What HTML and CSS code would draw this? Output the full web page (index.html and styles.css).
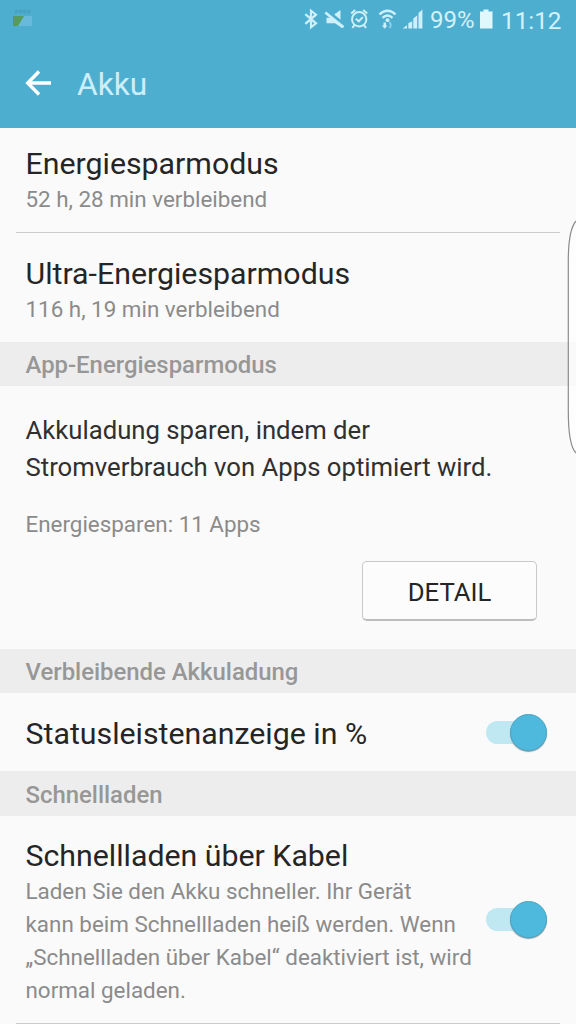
FILE: index.html
```html
<!DOCTYPE html>
<html lang="de">
<head>
<meta charset="utf-8">
<title>Akku</title>
<link rel="stylesheet" href="styles.css">
</head>
<body>
<div class="screen">
  <header class="header">
    <div class="status">
      <svg class="notification" width="20" height="20" viewBox="0 0 20 20"><path d="M2 3.500h16" stroke="#3e8aa5" stroke-width="3.500" stroke-dasharray="3.200 .9" opacity=".35"/><path d="M0 8h19v10H0z" fill="#68b9dc"/><path d="M0 8h11L5 18H0z" fill="#559b5c"/></svg>
      <div class="status-icons">
        <svg width="130" height="24" viewBox="300 8 130 24" fill="none" stroke="#cdf0fa">
          <path d="M305.300 14.200L316 23.300l-5 4V10.700l5 4-10.700 9.100" stroke-width="2.200"/>
          <path d="M340.500 10v9.800l-6.300-5.300zM326.500 17.800h5L343.500 25.800v2h-2l-6.500-4.600h-8.500z" fill="#cdf0fa" stroke="none"/>
          <path d="M325.300 12.500L343.300 27" stroke-width="2.600"/>
          <g stroke-width="2"><circle cx="359.200" cy="19.300" r="7.200"/><path d="M355.800 18.800l3 2.500 4-4.200M351.200 13.500l4-3.500M367.200 13.500l-4-3.500M354.500 25.200l-2.200 2.600M363.900 25.200l2.200 2.600"/></g>
          <g stroke-width="2.400"><path d="M379.500 14.300q8-7.300 16 0M382.500 17.800q5-4.400 10 0"/></g>
          <circle cx="387.500" cy="20.200" r="1.900" fill="#cdf0fa" stroke="none"/>
          <path d="M383.500 22.500h2.500v3h1.500l-2.800 3.200-2.800-3.200h1.600z" fill="#cdf0fa" stroke="none"/>
          <path d="M389.500 22q2.500 3 0 6" stroke="#8fd2e7" stroke-width="1.800"/>
          <path d="M402.500 28.500l4.500-3.200v3.200zM408.300 23.300l3.900-2v7.200h-3.900zM413.300 18.500l3.900-3v13h-3.900zM418.500 13l3.900-3.500v19h-3.900z" fill="#cdf0fa" stroke="none"/>
        </svg>
        <span class="percent">99%</span>
        <svg class="battery" width="14" height="20" viewBox="0 0 14 20"><path d="M4.500 .5h5v2h4V19.500H1V2.500h3.500z" fill="#e0f7fc"/></svg>
        <span class="clock">11:12</span>
      </div>
    </div>
    <div class="appbar">
      <svg class="back" width="26" height="26" viewBox="0 0 26 26" fill="none" stroke="#fff" stroke-width="3.400"><path d="M26 13H3M14 1.500L2.700 13l11.300 11.500"/></svg>
      <h1 class="heading">Akku</h1>
    </div>
  </header>
  <main>
    <section class="row row-first">
      <h2 class="title">Energiesparmodus</h2>
      <p class="sub">52 h, 28 min verbleibend</p>
    </section>
    <hr class="divider">
    <section class="row row-second">
      <h2 class="title">Ultra-Energiesparmodus</h2>
      <p class="sub">116 h, 19 min verbleibend</p>
    </section>
    <h3 class="section">App-Energiesparmodus</h3>
    <section class="row row-apps">
      <p class="body">Akkuladung sparen, indem der<br>Stromverbrauch von Apps optimiert wird.</p>
      <p class="sub apps">Energiesparen: 11 Apps</p>
      <button class="detail">DETAIL</button>
    </section>
    <h3 class="section">Verbleibende Akkuladung</h3>
    <section class="row row-status">
      <h2 class="title">Statusleistenanzeige in %</h2>
      <span class="switch"><span class="knob"></span></span>
    </section>
    <h3 class="section section-last">Schnellladen</h3>
    <section class="row row-cable">
      <div class="cable-text">
        <h2 class="title">Schnellladen über Kabel</h2>
        <p class="sub">Laden Sie den Akku schneller. Ihr Gerät<br>kann beim Schnellladen heiß werden. Wenn<br>„Schnellladen über Kabel“ deaktiviert ist, wird<br>normal geladen.</p>
      </div>
      <span class="switch"><span class="knob"></span></span>
    </section>
    <hr class="divider">
  </main>
  <svg class="edge-panel" width="9" height="236" viewBox="0 0 9 236"><path d="M9 2C3 9 1.300 22 1.300 42v150c0 22 1.700 36 7.700 42z" fill="#fff" fill-opacity=".65"/><path d="M9 2C3 9 1.300 22 1.300 42v150c0 22 1.700 36 7.700 42" fill="none" stroke="#8b8b8b" stroke-width="1.200"/></svg>
</div>
</body>
</html>
```
FILE: styles.css
```css
* { box-sizing: border-box; }
body { margin: 0; font-family: Roboto, "Liberation Sans", sans-serif; background: #fafafa; color: #252525; }
h1, h2, h3, p { margin: 0; font-weight: 400; white-space: nowrap; }
.screen { position: relative; width: 576px; height: 1024px; overflow: hidden; }
.header { height: 128px; background: #4eaed0; }
.status { height: 40px; display: flex; justify-content: space-between; padding: 0 15px 0 13px; }
.notification { margin-top: 8px; }
.status-icons { display: flex; align-items: center; color: #d3f2fa; font-size: 24px; }
.percent { width: 49px; white-space: nowrap; }
.battery { margin: 0 8px 2px 0; }
.clock { width: 60px; font-size: 24.3px; white-space: nowrap; }
.appbar { height: 88px; display: flex; align-items: center; padding-left: 25px; }
.back { margin-top: -2px; }
.heading { margin-left: 26px; padding-top: 1px; font-size: 31.7px; line-height: 36px; color: #cceefa; }
.row { padding: 0 25.5px; }
.row-first { height: 104px; padding-top: 18px; }
.row-second { height: 109px; padding-top: 23px; }
.title { font-size: 30.3px; line-height: 36px; }
.sub { font-size: 22.4px; line-height: 33px; color: #8b8b8b; }
.title + .sub { padding-top: 1px; }
.divider { height: 1px; margin: 0 16px; border: 0; background: #cbcbcb; }
.section { height: 44px; padding-left: 25.5px; background: #ededed; color: #979797; font-size: 23.9px; line-height: 46px; font-weight: 500; }
.section-last { height: 45px; line-height: 48px; }
.row-apps { height: 263px; padding-top: 26px; padding-right: 39px; display: flex; flex-direction: column; }
.body { font-size: 25.7px; line-height: 37px; color: #303030; }
.apps { margin-top: 22px; }
.detail { align-self: flex-end; width: 175px; height: 60px; margin-top: 20px; padding: 2px 0 0; border: 1px solid #c9c9c9; border-bottom: 2px solid #bdbdbd; border-radius: 5px; background: #fcfcfc; color: #252525; font: 25.7px Roboto, "Liberation Sans", sans-serif; }
.row-status, .row-cable { display: flex; align-items: center; justify-content: space-between; padding-right: 29px; }
.row-status { height: 78px; }
.row-status .title { padding-top: 3px; }
.row-cable { height: 207px; }
.cable-text { padding-top: 5px; }
.switch { flex: none; position: relative; width: 61px; height: 37px; margin-left: -20px; display: flex; justify-content: flex-end; }
.switch::before { content: ""; position: absolute; left: 0; top: 7px; width: 50px; height: 23px; border-radius: 12px; background: #bfe8f3; }
.knob { position: relative; width: 37px; height: 37px; border-radius: 50%; background: #4fb8dd; border: 1px solid #4aa6c6; box-shadow: 0 1px 1px #8b9da5; }
.edge-panel { position: absolute; right: 0; top: 219px; }
```
